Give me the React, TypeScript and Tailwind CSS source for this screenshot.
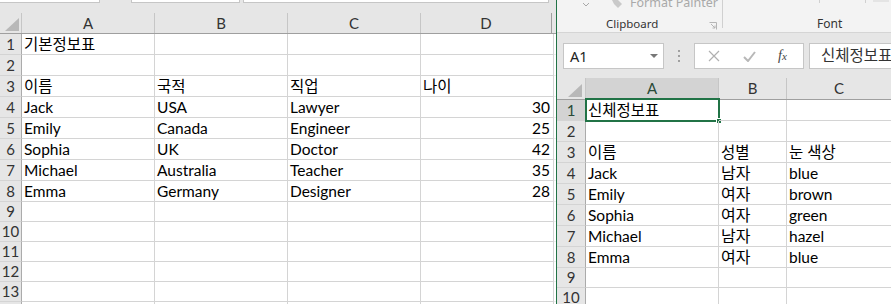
import React from "react";

const CELL_FONT = "[font-family:Lato,'Noto_Sans_CJK_KR',sans-serif] text-[15.5px]";
const UI_FONT = "[font-family:'Noto_Sans','Noto_Sans_CJK_KR',sans-serif]";

type Row = string[];

const leftData: Row[] = [
  ["기본정보표", "", "", ""],
  ["", "", "", ""],
  ["이름", "국적", "직업", "나이"],
  ["Jack", "USA", "Lawyer", "30"],
  ["Emily", "Canada", "Engineer", "25"],
  ["Sophia", "UK", "Doctor", "42"],
  ["Michael", "Australia", "Teacher", "35"],
  ["Emma", "Germany", "Designer", "28"],
  ["", "", "", ""],
  ["", "", "", ""],
  ["", "", "", ""],
  ["", "", "", ""],
  ["", "", "", ""],
  ["", "", "", ""],
];

const rightData: Row[] = [
  ["신체정보표", "", ""],
  ["", "", ""],
  ["이름", "성별", "눈 색상"],
  ["Jack", "남자", "blue"],
  ["Emily", "여자", "brown"],
  ["Sophia", "여자", "green"],
  ["Michael", "남자", "hazel"],
  ["Emma", "여자", "blue"],
  ["", "", ""],
  ["", "", ""],
];

function Corner() {
  return (
    <svg width="16" height="14" viewBox="0 0 16 14" className="block">
      <polygon points="15,0 15,13 1,13" fill="#b8b8b8" />
    </svg>
  );
}

function LeftPane() {
  return (
    <div className="w-[556px] shrink-0 flex flex-col bg-white">
      <div className="h-[13px] shrink-0 bg-[#e6e6e6] flex items-start">
        <div className="w-[100px] h-[3px] bg-white border-b border-r border-[#c6c6c6]" />
        <div className="w-[31px]" />
        <div className="w-[109px] h-[3px] bg-white border-b border-x border-[#c6c6c6]" />
        <div className="w-[3px]" />
        <div className="w-[306px] h-[3px] bg-white border-b border-x border-[#c6c6c6]" />
      </div>
      <div className="flex h-[21px] shrink-0 bg-[#e6e6e6] border-b border-[#9f9f9f]">
        <div className="w-[22px] shrink-0 border-r border-[#c6c6c6] flex items-end justify-end pr-[1px] pb-[1px]">
          <Corner />
        </div>
        {["A", "B", "C", "D"].map((c, i) => (
          <div
            key={c}
            className={`${i < 3 ? "w-[133px] border-r border-[#c6c6c6]" : "w-[131px] border-r border-[#9f9f9f]"} shrink-0 flex items-center justify-center text-[15px] text-[#333] ${CELL_FONT}`}
          >
            {c}
          </div>
        ))}
      </div>
      {leftData.map((row, r) => (
        <div key={r} className={`flex ${r < 8 ? "h-[21px]" : "h-[20px]"} shrink-0`}>
          <div
            className={`w-[22px] shrink-0 bg-[#e6e6e6] border-r border-r-[#ababab] border-b border-b-[#d4d4d4] flex items-end justify-center text-[15px] leading-[19px] text-[#333] overflow-hidden whitespace-nowrap ${CELL_FONT}`}
          >
            {r + 1}
          </div>
          {row.map((v, c) => (
            <div
              key={c}
              className={`w-[133px] shrink-0 border-r border-b border-[#d4d4d4] flex items-end ${
                c === 3 && r > 2 ? "justify-end pr-[3px]" : "pl-[2px]"
              } leading-[19px] text-black whitespace-nowrap ${CELL_FONT}`}
            >
              {v}
            </div>
          ))}
          <div className="flex-1 border-b border-[#eeeeee]" />
        </div>
      ))}
    </div>
  );
}

function Ribbon() {
  return (
    <div className={`h-[33px] shrink-0 bg-[#f3f3f3] border-b border-[#d5d5d5] flex ${UI_FONT}`}>
      <div className="w-[49px] shrink-0 flex justify-end pr-[16px]">
        <svg width="8" height="6" viewBox="0 0 8 6" className="mt-[2px]">
          <polyline points="1,1 4,4 7,1" fill="none" stroke="#a8a8a8" strokeWidth="1" />
        </svg>
      </div>
      <div className="w-[116px] shrink-0 flex flex-col">
        <div className="h-[8px] overflow-hidden flex items-start">
          <svg width="16" height="8" viewBox="0 0 16 8" className="ml-[4px]">
            <path d="M2 0 L8 0 L12 4 L8 8 L4 4 Z" fill="#c9c9c9" />
          </svg>
          <span className="ml-[4px] -mt-[5px] text-[12.5px] leading-[16px] text-[#a9a9a9] whitespace-nowrap">
            Format Painter
          </span>
        </div>
        <div className="flex items-center h-[16px] mt-[8px]">
          <span className="text-[11.5px] leading-[16px] text-[#333]">Clipboard</span>
          <svg width="8" height="8" viewBox="0 0 8 8" className="ml-auto mr-[5px] mt-[3px]">
            <path d="M0.5 0.5 H7.5 V7.5" fill="none" stroke="#b5b5b5" />
            <path d="M2 2 L6 6 M6 3.5 V6 H3.5" fill="none" stroke="#b5b5b5" />
          </svg>
        </div>
      </div>
      <div className="w-px h-[28px] bg-[#d0d0d0] shrink-0" />
      <div className="flex-1 flex flex-col">
        <div className="h-[3px] flex">
          <div className="w-[96px]" />
          <div className="w-px h-[3px] bg-[#d0d0d0]" />
          <div className="w-[45px]" />
          <div className="w-px h-[3px] bg-[#d0d0d0]" />
          <div className="w-[7px]" />
          <div className="w-[16px] h-[2px] bg-[#e4e4e4]" />
        </div>
        <div className="flex items-center h-[16px] mt-[13px] pl-[94px]">
          <span className="text-[12px] leading-[16px] text-[#333]">Font</span>
        </div>
      </div>
    </div>
  );
}

function FormulaBar() {
  return (
    <div className={`h-[45px] shrink-0 bg-[#e6e6e6] flex items-start pt-[10px] pl-[6px] ${UI_FONT}`}>
      <div className="w-[101px] h-[26px] shrink-0 bg-white border border-[#c6c6c6] flex items-center pl-[6px] pr-[5px]">
        <span className="text-[14.5px] text-[#222] leading-none">A1</span>
        <svg width="8" height="5" viewBox="0 0 8 5" className="ml-auto">
          <polygon points="0,0 8,0 4,4" fill="#777" />
        </svg>
      </div>
      <div className="w-[30px] shrink-0 flex justify-center pt-[7px]">
        <div className="flex flex-col gap-[3px]">
          <div className="w-[2px] h-[2px] bg-[#a0a0a0]" />
          <div className="w-[2px] h-[2px] bg-[#a0a0a0]" />
          <div className="w-[2px] h-[2px] bg-[#a0a0a0]" />
        </div>
      </div>
      <div className="w-[110px] h-[26px] shrink-0 bg-white border border-[#c6c6c6] flex items-center">
        <svg width="12" height="12" viewBox="0 0 12 12" className="ml-[13px]">
          <path d="M1 1 L11 11 M11 1 L1 11" stroke="#b0b0b0" strokeWidth="1.2" />
        </svg>
        <svg width="13" height="11" viewBox="0 0 13 11" className="ml-[23px]">
          <path d="M1 6 L5 10 L12 1" fill="none" stroke="#b8b8b8" strokeWidth="2" />
        </svg>
        <span className="ml-[22px] text-[14px] italic text-[#444] [font-family:'Liberation_Serif',serif] leading-none">
          f<span className="text-[11px]">x</span>
        </span>
      </div>
      <div className="w-[5px] shrink-0" />
      <div className={`flex-1 h-[26px] bg-white border border-[#c6c6c6] border-r-0 flex items-center pl-[11px] overflow-hidden whitespace-nowrap text-[#333] ${CELL_FONT}`}>
        신체정보표
      </div>
    </div>
  );
}

function RightGrid() {
  const widths = ["w-[133px]", "w-[68px]", "flex-1"];
  return (
    <div className="flex flex-col">
      <div className="flex h-[22px] shrink-0 bg-[#e6e6e6] border-b border-[#9f9f9f]">
        <div className="w-[29px] shrink-0 border-r border-[#c6c6c6] flex items-end justify-end pr-[2px] pb-[1px]">
          <Corner />
        </div>
        {["A", "B", "C"].map((c, i) => (
          <div
            key={c}
            className={`${widths[i]} shrink-0 ${i < 2 ? "border-r border-[#c6c6c6]" : ""} ${
              i === 0 ? "bg-[#d3d3d3] text-[#2a4a38]" : "text-[#333]"
            } flex items-center justify-center text-[15px] ${CELL_FONT}`}
          >
            {c}
          </div>
        ))}
      </div>
      {rightData.map((row, r) => (
        <div key={r} className={`flex ${r < 8 ? "h-[21px]" : "h-[20px]"} shrink-0`}>
          <div
            className={`w-[29px] shrink-0 ${
              r === 0 ? "bg-[#d3d3d3] text-[#2a4a38]" : "bg-[#e6e6e6] text-[#333]"
            } border-r border-r-[#ababab] border-b border-b-[#d4d4d4] flex items-end justify-center text-[15px] leading-[19px] ${CELL_FONT}`}
          >
            {r + 1}
          </div>
          {row.map((v, c) => {
            const korean = c === 1 && r > 2;
            return (
              <div
                key={c}
                className={`${widths[c]} shrink-0 relative ${c < 2 ? "border-r" : ""} border-b border-[#d4d4d4] flex ${
                  korean ? "items-start" : "items-end"
                } pl-[2px] ${korean ? "text-[16px] leading-[19px]" : "leading-[19px]"} text-black whitespace-nowrap ${CELL_FONT}`}
              >
                {v}
                {r === 0 && c === 0 && (
                  <div className="absolute -left-[1px] -top-[2px] w-[135px] h-[24px] border-2 border-[#217346] pointer-events-none">
                    <div className="absolute -right-[4px] -bottom-[4px] w-[6px] h-[6px] bg-[#217346] border border-white" />
                  </div>
                )}
              </div>
            );
          })}
        </div>
      ))}
    </div>
  );
}

export default function App() {
  return (
    <div className="w-[891px] h-[304px] overflow-hidden flex bg-white">
      <LeftPane />
      <div className="w-px shrink-0 bg-[#217346]" />
      <div className="flex-1 flex flex-col min-w-0">
        <Ribbon />
        <FormulaBar />
        <RightGrid />
      </div>
    </div>
  );
}
